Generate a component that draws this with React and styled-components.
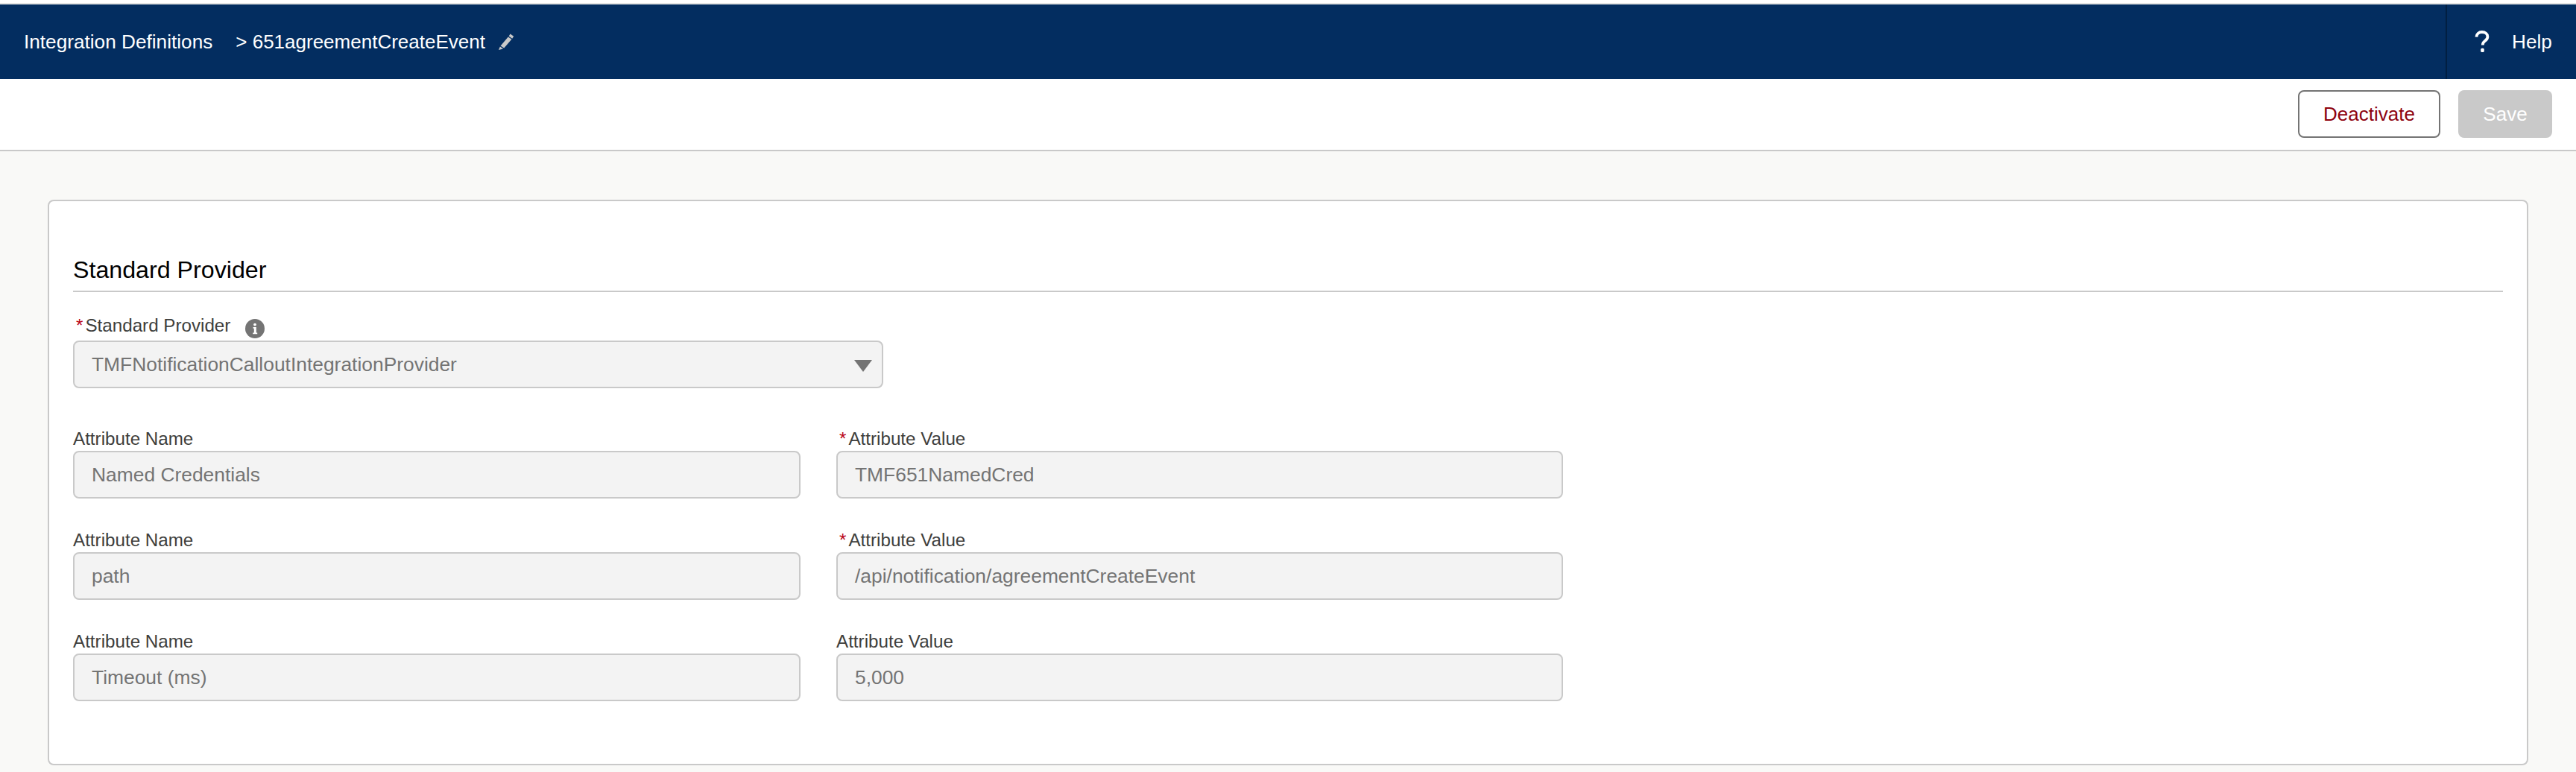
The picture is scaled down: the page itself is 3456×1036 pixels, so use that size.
import React from "react";
import styled, { createGlobalStyle } from "styled-components";

const GlobalStyle = createGlobalStyle`
  html, body {
    margin: 0;
    padding: 0;
    background: #ffffff;
    font-family: "Liberation Sans", Arial, sans-serif;
  }
  * {
    box-sizing: border-box;
  }
`;

const attributes = [
  { name: "Named Credentials", value: "TMF651NamedCred", required: true },
  { name: "path", value: "/api/notification/agreementCreateEvent", required: true },
  { name: "Timeout (ms)", value: "5,000", required: false },
];

const PencilIcon = () => (
  <PencilSvg viewBox="0 0 22 22">
    <path d="M16.6 0.6l4.6 3.2-2 2.9-4.6-3.2z" fill="#c9c9c9" />
    <path d="M13.8 4.6l4.6 3.2L8.2 19.6 3.6 16.4z" fill="#c9c9c9" />
    <path d="M2.9 17.6l4.2 2.9L1 22z" fill="#c9c9c9" />
  </PencilSvg>
);

const QuestionIcon = () => (
  <svg width="20" height="30" viewBox="0 0 20 30">
    <path d="M2.4 8.6C2.6 4.6 5.4 2 9.8 2c4.4 0 7.6 2.5 7.6 6.2 0 2.7-1.4 4.2-3.6 5.8-2.2 1.6-3 2.8-3 5.4" fill="none" stroke="#ffffff" strokeWidth="3.8" />
    <rect x="8.2" y="23.8" width="4.6" height="5.2" rx="1.6" fill="#ffffff" />
  </svg>
);

const InfoIcon = () => (
  <InfoSvg viewBox="0 0 26 26">
    <circle cx="13" cy="13" r="13" fill="#747474" />
    <circle cx="13" cy="7.6" r="1.9" fill="#ffffff" />
    <path d="M10.6 11h4.2v7.4h1.4v1.8H10.2v-1.8h1.6v-5.6h-1.2z" fill="#ffffff" />
  </InfoSvg>
);

const App = () => (
  <>
    <GlobalStyle />
    <Page>
      <TopStrip />
      <Header>
        <Breadcrumb>
          <span>Integration Definitions</span>
          <Current>&gt; 651agreementCreateEvent</Current>
          <PencilIcon />
        </Breadcrumb>
        <HelpLink>
          <QuestionIcon />
          <span>Help</span>
        </HelpLink>
      </Header>
      <Toolbar>
        <DeactivateButton>Deactivate</DeactivateButton>
        <SaveButton disabled>Save</SaveButton>
      </Toolbar>
      <Content>
        <Card>
          <SectionTitle>Standard Provider</SectionTitle>
          <ProviderField>
            <ProviderLabel>
              <Required>*</Required>Standard Provider
              <InfoIcon />
            </ProviderLabel>
            <SelectBox>
              <span>TMFNotificationCalloutIntegrationProvider</span>
              <Caret />
            </SelectBox>
          </ProviderField>
          <AttributeGrid>
            {attributes.map((attr) => (
              <React.Fragment key={attr.name}>
                <div>
                  <FieldLabel>Attribute Name</FieldLabel>
                  <InputBox>{attr.name}</InputBox>
                </div>
                <div>
                  <FieldLabel>
                    {attr.required && <Required>*</Required>}Attribute Value
                  </FieldLabel>
                  <InputBox>{attr.value}</InputBox>
                </div>
              </React.Fragment>
            ))}
          </AttributeGrid>
        </Card>
      </Content>
    </Page>
  </>
);

export default App;

const Page = styled.div`
  width: 3456px;
  height: 1036px;
  overflow: hidden;
  display: flex;
  flex-direction: column;
  background: #f9f9f7;
`;

const TopStrip = styled.div`
  height: 6px;
  background: #ffffff;
  border-bottom: 2px solid #e5e5e5;
`;

const Header = styled.header`
  height: 100px;
  display: flex;
  align-items: center;
  justify-content: space-between;
  padding-left: 32px;
  background: #032d60;
  color: #ffffff;
  font-size: 26.2px;
`;

const Breadcrumb = styled.nav`
  display: flex;
  align-items: center;
`;

const Current = styled.span`
  margin-left: 31px;
  font-size: 26px;
`;

const PencilSvg = styled.svg`
  width: 22px;
  height: 22px;
  margin-left: 17px;
`;

const HelpLink = styled.div`
  width: 175px;
  height: 100%;
  display: flex;
  align-items: center;
  gap: 30px;
  padding-left: 37px;
  border-left: 2px solid #011f42;
`;

const Toolbar = styled.div`
  height: 97px;
  display: flex;
  align-items: center;
  justify-content: flex-end;
  gap: 24px;
  padding: 0 32px 2px 0;
  background: #ffffff;
  border-bottom: 2px solid #c9c9c9;
`;

const DeactivateButton = styled.button`
  width: 191px;
  height: 64px;
  padding: 2px 0 0;
  border: 2px solid #747474;
  border-radius: 8px;
  background: #ffffff;
  color: #8e030f;
  font: 26px "Liberation Sans", Arial, sans-serif;
`;

const SaveButton = styled.button`
  width: 126px;
  height: 64px;
  padding: 2px 0 0;
  border: none;
  border-radius: 8px;
  background: #c9c9c9;
  color: #ffffff;
  font: 26px "Liberation Sans", Arial, sans-serif;
`;

const Content = styled.main`
  flex: 1;
  padding: 65px 64px 0;
`;

const Card = styled.section`
  height: 759px;
  padding: 64px 32px 0;
  background: #ffffff;
  border: 2px solid #c9c9c9;
  border-radius: 8px;
`;

const SectionTitle = styled.h2`
  margin: 0;
  height: 58px;
  line-height: 56px;
  font-size: 32.2px;
  font-weight: 400;
  color: #000000;
  border-bottom: 2px solid #c9c9c9;
`;

const ProviderField = styled.div`
  width: 1087px;
  margin-top: 27px;
`;

const FieldLabel = styled.div`
  height: 38px;
  display: flex;
  align-items: center;
  padding-top: 6px;
  font-size: 24.2px;
  line-height: 30px;
  color: #3e3e3c;
`;

const ProviderLabel = styled(FieldLabel)`
  padding: 0 0 2px;
`;

const Required = styled.span`
  margin: 0 3px 0 4px;
  color: #ba0517;
`;

const InfoSvg = styled.svg`
  width: 26px;
  height: 26px;
  margin: 8px 0 0 20px;
`;

const InputBox = styled.div`
  height: 64px;
  display: flex;
  align-items: center;
  padding: 0 23px;
  background: #f3f3f3;
  border: 2px solid #c9c9c9;
  border-radius: 8px;
  font-size: 26.4px;
  color: #747474;
`;

const SelectBox = styled(InputBox)`
  justify-content: space-between;
  padding-right: 13px;
`;

const Caret = styled.span`
  width: 0;
  height: 0;
  margin-top: 4px;
  border-left: 12px solid transparent;
  border-right: 12px solid transparent;
  border-top: 16px solid #747474;
`;

const AttributeGrid = styled.div`
  display: grid;
  grid-template-columns: 976px 975px;
  column-gap: 48px;
  row-gap: 34px;
  margin-top: 46px;
`;
